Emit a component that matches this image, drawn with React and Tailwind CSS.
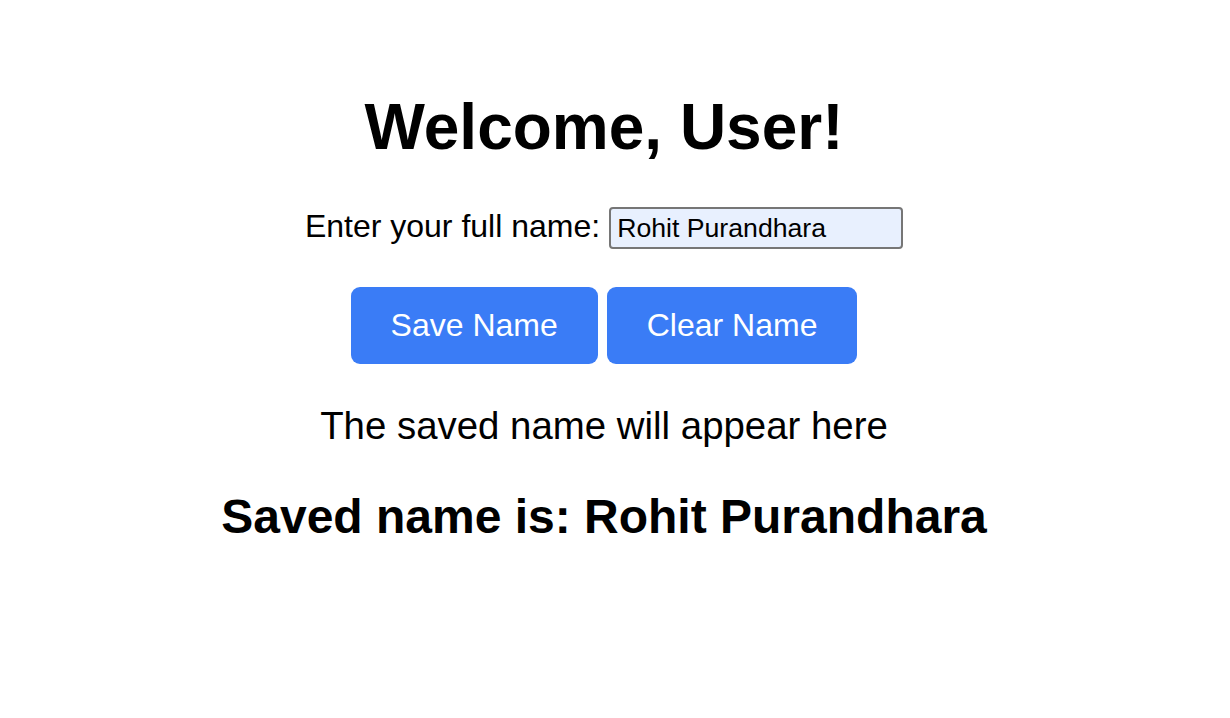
import React, { useState } from "react";

const App = () => {
  const [name, setName] = useState("Rohit Purandhara");
  const [saved, setSaved] = useState("Rohit Purandhara");

  return (
    <div className="min-h-screen bg-white text-black font-['Liberation_Sans',Arial,sans-serif]">
      <div className="w-[1208px] flex flex-col items-center text-center pt-[90px]">
        <h1 className="text-[64px] leading-[74px] font-bold">Welcome, User!</h1>

        <div className="flex items-baseline gap-[9px] mt-[43px]">
          <label htmlFor="fullName" className="text-[32px] leading-[37px]">
            Enter your full name:
          </label>
          <input
            id="fullName"
            type="text"
            value={name}
            onChange={(e) => setName(e.target.value)}
            className="w-[294px] h-[42px] px-[6px] text-[26.67px] border-2 border-[#767676] rounded-[4px] bg-[#e8f0fe] outline-none"
          />
        </div>

        <div className="flex gap-[9px] mt-[38px]">
          <button
            onClick={() => setSaved(name)}
            className="px-[40px] py-[20px] text-[32px] leading-[37px] text-white bg-[#3a7cf6] rounded-[9px]"
          >
            Save Name
          </button>
          <button
            onClick={() => {
              setName("");
              setSaved("");
            }}
            className="px-[40px] py-[20px] text-[32px] leading-[37px] text-white bg-[#3a7cf6] rounded-[9px]"
          >
            Clear Name
          </button>
        </div>

        <p className="text-[38.4px] leading-[44px] mt-[40px]">The saved name will appear here</p>

        <h2 className="text-[48px] leading-[55px] font-bold mt-[41px]">Saved name is: {saved}</h2>
      </div>
    </div>
  );
};

export default App;
